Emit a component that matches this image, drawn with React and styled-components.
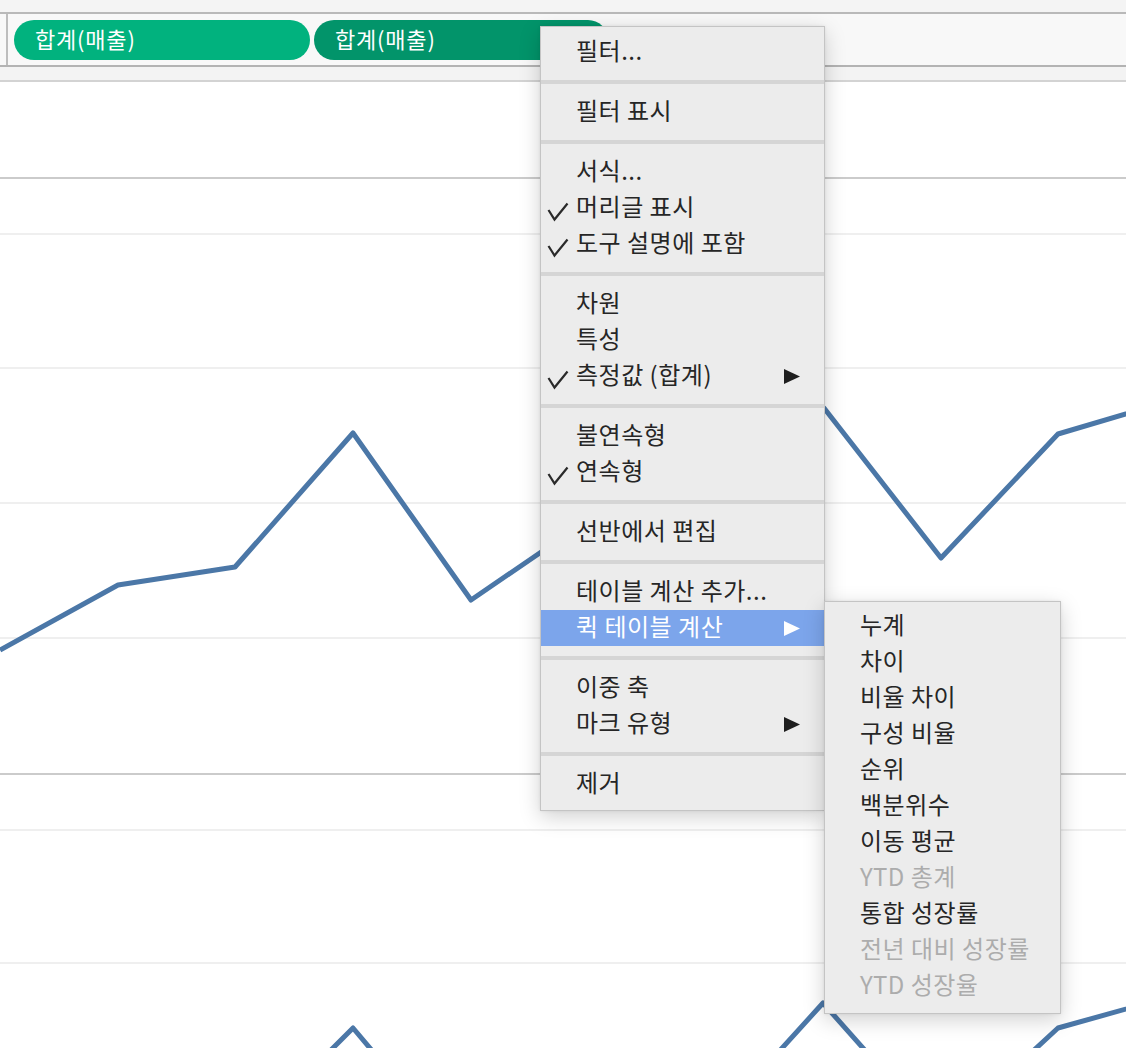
import React from 'react';
import styled, { createGlobalStyle } from 'styled-components';

const GlobalStyle = createGlobalStyle`
  html, body {
    margin: 0;
    padding: 0;
    background: #ffffff;
    font-family: "Noto Sans CJK KR", "Noto Sans", sans-serif;
  }
`;

const Page = styled.div`
  position: relative;
  width: 1126px;
  height: 1048px;
  overflow: hidden;
  background: #ffffff;
  display: flex;
  flex-direction: column;
`;

const TopStrip = styled.div`
  height: 12px;
  background: #f4f4f4;
  border-bottom: 2px solid #b9b9b9;
`;

const Shelf = styled.div`
  height: 51px;
  background: #f8f8f8;
  border-bottom: 2px solid #b3b3b3;
  display: flex;
  align-items: center;
  gap: 4px;
`;

const ShelfDivider = styled.div`
  align-self: stretch;
  width: 2px;
  margin-left: 6px;
  margin-right: 2px;
  background: #bdbdbd;
`;

const Pill = styled.div`
  width: ${({ $w }) => $w}px;
  height: 40px;
  box-sizing: border-box;
  border-radius: 20px;
  padding: 0 21px 3px;
  display: flex;
  align-items: center;
  background: ${({ $active }) => ($active ? '#02946a' : '#01b27e')};
  color: #ffffff;
  font-size: 22px;
  letter-spacing: 0.8px;
  flex-shrink: 0;
`;

const SubStrip = styled.div`
  height: 13px;
  background: #f3f3f3;
  border-bottom: 2px solid #d3d3d3;
`;

const ChartArea = styled.div`
  flex: 1;
  background: #ffffff;
`;

const Menu = styled.div`
  position: absolute;
  left: ${({ $x }) => $x}px;
  top: ${({ $y }) => $y}px;
  width: ${({ $w }) => $w}px;
  box-sizing: border-box;
  background: #ececec;
  border: 1px solid #c4c4c4;
  box-shadow: 0 6px 20px rgba(0, 0, 0, 0.18), 0 0 3px rgba(0, 0, 0, 0.08);
  padding: ${({ $pad }) => $pad};
`;

const Item = styled.div`
  position: relative;
  height: 36px;
  box-sizing: border-box;
  display: flex;
  align-items: center;
  padding: 0 0 5px 35px;
  font-size: 24px;
  letter-spacing: 0.5px;
  white-space: nowrap;
  color: ${({ $active, $disabled }) =>
    $active ? '#ffffff' : $disabled ? '#acacac' : '#262626'};
  background: ${({ $active }) => ($active ? '#7ca5eb' : 'transparent')};
`;

const Check = styled.svg`
  position: absolute;
  left: 6px;
  top: 12px;
`;

const Arrow = styled.svg`
  position: absolute;
  right: 24px;
  top: 11px;
`;

const Separator = styled.div`
  height: 4px;
  background: #d5d5d5;
  margin: 10px 0;
`;

const CheckMark = () => (
  <Check width="22" height="20" viewBox="0 0 22 20">
    <path d="M1.5 8 L7.5 17.5 L20.5 1.5" fill="none" stroke="#2a2a2a" strokeWidth="2.2" />
  </Check>
);

const SubArrow = ({ color }) => (
  <Arrow width="16" height="15" viewBox="0 0 16 15">
    <polygon points="0,0 16,7.5 0,15" fill={color} />
  </Arrow>
);

const mainMenu = [
  [{ label: '필터...' }],
  [{ label: '필터 표시' }],
  [
    { label: '서식...' },
    { label: '머리글 표시', checked: true },
    { label: '도구 설명에 포함', checked: true },
  ],
  [
    { label: '차원' },
    { label: '특성' },
    { label: '측정값 (합계)', checked: true, sub: true },
  ],
  [{ label: '불연속형' }, { label: '연속형', checked: true }],
  [{ label: '선반에서 편집' }],
  [{ label: '테이블 계산 추가...' }, { label: '퀵 테이블 계산', sub: true, active: true }],
  [{ label: '이중 축' }, { label: '마크 유형', sub: true }],
  [{ label: '제거' }],
];

const quickCalc = [
  { label: '누계' },
  { label: '차이' },
  { label: '비율 차이' },
  { label: '구성 비율' },
  { label: '순위' },
  { label: '백분위수' },
  { label: '이동 평균' },
  { label: 'YTD 총계', disabled: true },
  { label: '통합 성장률' },
  { label: '전년 대비 성장률', disabled: true },
  { label: 'YTD 성장율', disabled: true },
];

const topLine = [
  [0, 650], [118, 585], [235, 567], [353, 433], [471, 600], [588, 520],
  [706, 450], [824, 408], [941, 558], [1058, 434], [1176, 399],
];

const bottomLine = [
  [0, 1260], [118, 1200], [235, 1146], [353, 1028], [471, 1168], [588, 1150],
  [706, 1132], [823, 1003], [941, 1136], [1058, 1028], [1176, 995],
];

const lightGrid = [234, 368, 503, 638, 830, 963];
const darkGrid = [178, 774];

const toPoints = (pts) => pts.map(([x, y]) => `${x},${y}`).join(' ');

const Chart = () => (
  <svg width="1126" height="966" viewBox="0 82 1126 966" style={{ display: 'block' }}>
    {lightGrid.map((y) => (
      <line key={y} x1="0" x2="1126" y1={y} y2={y} stroke="#efefef" strokeWidth="2" />
    ))}
    {darkGrid.map((y) => (
      <line key={y} x1="0" x2="1126" y1={y} y2={y} stroke="#cbcbcb" strokeWidth="2" />
    ))}
    <polyline points={toPoints(topLine)} fill="none" stroke="#4b77a7" strokeWidth="5" strokeLinejoin="round" />
    <polyline points={toPoints(bottomLine)} fill="none" stroke="#4b77a7" strokeWidth="5" strokeLinejoin="round" />
  </svg>
);

export default function App() {
  return (
    <>
      <GlobalStyle />
      <Page>
        <TopStrip />
        <Shelf>
          <ShelfDivider />
          <Pill $w={296}>합계(매출)</Pill>
          <Pill $w={294} $active>합계(매출)</Pill>
        </Shelf>
        <SubStrip />
        <ChartArea>
          <Chart />
        </ChartArea>

        <Menu $x={540} $y={26} $w={285} $pad="7px 0 8px">
          {mainMenu.map((group, gi) => (
            <React.Fragment key={gi}>
              {gi > 0 && <Separator />}
              {group.map((it) => (
                <Item key={it.label} $active={it.active}>
                  {it.checked && <CheckMark />}
                  {it.label}
                  {it.sub && <SubArrow color={it.active ? '#ffffff' : '#1e1e1e'} />}
                </Item>
              ))}
            </React.Fragment>
          ))}
        </Menu>

        <Menu $x={824} $y={601} $w={237} $pad="6px 0 9px">
          {quickCalc.map((it) => (
            <Item key={it.label} $disabled={it.disabled}>
              {it.label}
            </Item>
          ))}
        </Menu>
      </Page>
    </>
  );
}
